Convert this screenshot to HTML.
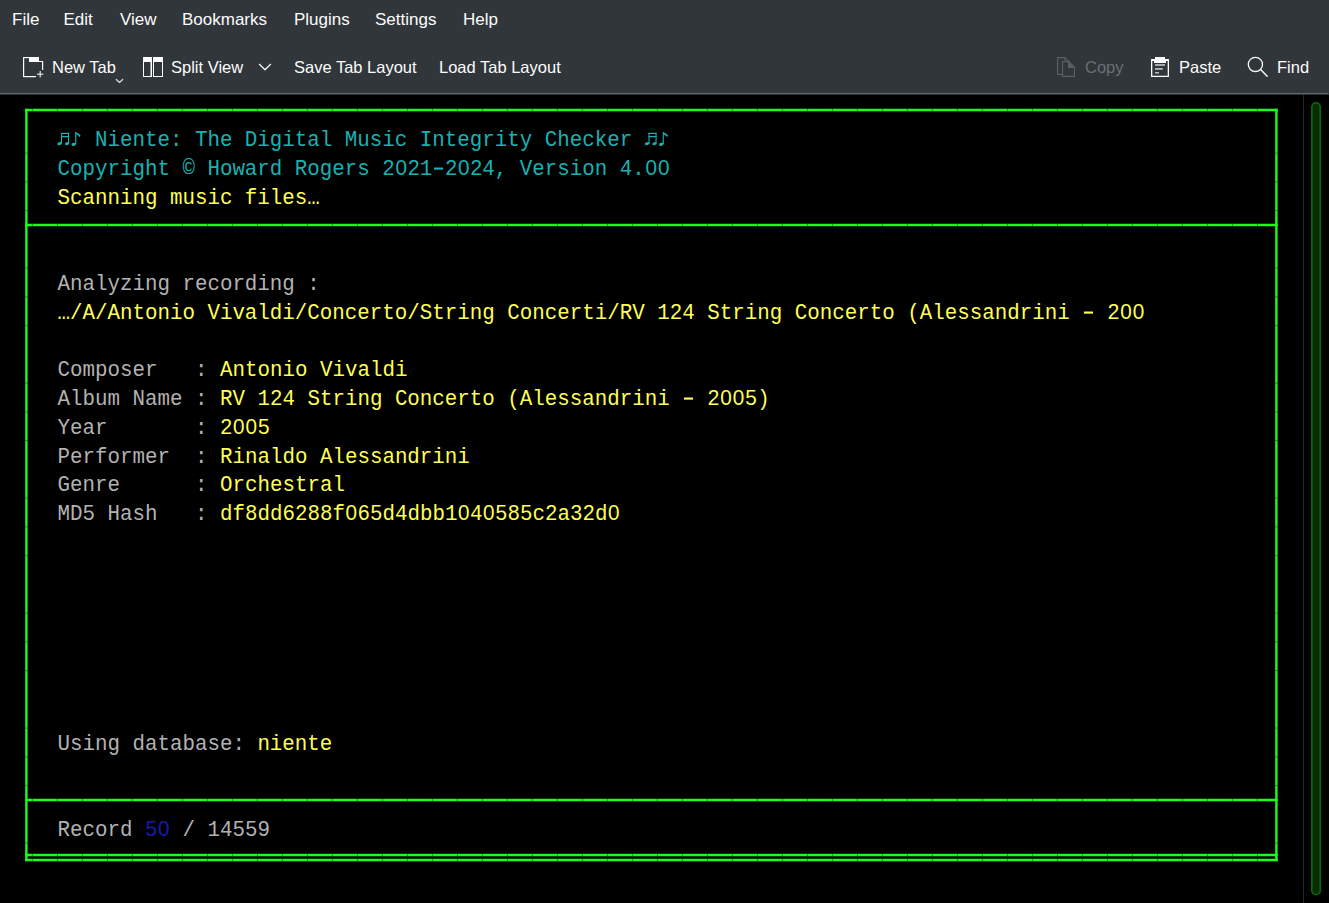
<!DOCTYPE html>
<html><head><meta charset="utf-8">
<style>
html,body{margin:0;padding:0;}
body{width:1329px;height:903px;position:relative;overflow:hidden;background:#000;font-family:"Liberation Sans",sans-serif;}
#top{position:absolute;left:0;top:0;width:1329px;height:95px;background:#31363b;}
#sep{position:absolute;left:0;top:93px;width:1328px;height:1px;background:#65696d;}
#sep2{position:absolute;left:0;top:94px;width:1328px;height:1px;background:#2b2f33;}
.m{position:absolute;top:1px;height:38px;line-height:38px;color:#fcfcfc;font-size:17px;white-space:pre;}
.t{position:absolute;top:48px;height:38px;line-height:38px;color:#fcfcfc;font-size:16.5px;white-space:pre;}
#vline{position:absolute;left:1303px;top:95px;width:1px;height:808px;background:#262626;}
#term{position:absolute;left:0;top:0;}
.r{position:absolute;left:57.4px;transform-origin:0 19px;transform:translateY(3px) scaleY(1.07);font-family:"Liberation Mono",monospace;font-size:20.833px;white-space:pre;color:#b2b2b2;height:28.75px;line-height:28.75px;}
.z{position:relative}.z::after{content:"";position:absolute;left:4.1px;width:4px;top:7.4px;height:4.4px;background:#000}
.d{position:relative}.d::after{content:"";position:absolute;left:1.6px;width:9.4px;top:10.2px;height:1.5px;background:currentColor}
.c{color:#18b2b2}.y{color:#ffff54}.b{color:#1818b2}.g{color:#b2b2b2}
</style></head><body>
<div id="top"></div>
<div id="sep"></div>
<div id="sep2"></div>
<div class="m" style="left:12px">File</div>
<div class="m" style="left:63.5px">Edit</div>
<div class="m" style="left:120px">View</div>
<div class="m" style="left:182px">Bookmarks</div>
<div class="m" style="left:294px">Plugins</div>
<div class="m" style="left:375px">Settings</div>
<div class="m" style="left:463px">Help</div>

<div class="t" style="left:52px">New Tab</div>
<div class="t" style="left:171px">Split View</div>
<div class="t" style="left:294px">Save Tab Layout</div>
<div class="t" style="left:439px">Load Tab Layout</div>
<div class="t" style="left:1085px;color:#6b6f73">Copy</div>
<div class="t" style="left:1179px">Paste</div>
<div class="t" style="left:1277px">Find</div>

<svg style="position:absolute;left:0;top:0" width="1329" height="93" viewBox="0 0 1329 93">
<g fill="#fcfcfc">
<rect x="23" y="57" width="1.2" height="20"/>
<rect x="23" y="57" width="16" height="1.2"/>
<rect x="29" y="57" width="10" height="5"/>
<rect x="39" y="61" width="4" height="1"/>
<rect x="42" y="61" width="1.2" height="9"/>
<rect x="23" y="76" width="13" height="1.2"/>
<rect x="37" y="73.6" width="6.4" height="1.2" opacity="0.85"/>
<rect x="39.6" y="71" width="1.2" height="6.4" opacity="0.85"/>
<path d="M143,57 H152 V77 H143 Z M144,62 V76 H150.5 V62 Z" fill-rule="evenodd"/>
<path d="M153,57 H163 V77 H153 Z M154,62 V76 H162 V62 Z" fill-rule="evenodd"/>
</g>
<g fill="none" stroke-linecap="round" stroke-linejoin="round">
<path d="M116.3,79.5 L119.5,82.4 L122.7,79.5" stroke="#d8d8d8" stroke-width="1.3"/>
<path d="M259.4,64.3 L265,69.8 L270.6,64.3" stroke="#fcfcfc" stroke-width="1.2"/>
</g>
<g fill="none" stroke="#5d6064" stroke-width="1.1">
<path d="M1065,60.5 V57.6 H1057.6 V74.4 H1062"/>
<path d="M1065,57.6 L1069,61.6"/>
<path d="M1062.6,61.6 H1069 L1074.5,67.2 V76.4 H1062.6 Z"/>
</g>
<path d="M1068,61.6 L1074.5,68 H1068 Z" fill="#5d6064"/>
<g fill="#fcfcfc">
<path d="M1151,59 H1155 V57 H1165 V59 H1169 V77 H1151 Z M1152.3,61 V75.7 H1167.7 V61 H1166 V63 H1154 V61 Z" fill-rule="evenodd"/>
</g>
<g fill="#c8c8c8">
<rect x="1155" y="64.2" width="10" height="1.6"/>
<rect x="1155" y="68.1" width="7.7" height="1.6"/>
<rect x="1155" y="72.1" width="4" height="1.4"/>
</g>
<g fill="none" stroke="#fcfcfc">
<circle cx="1255.4" cy="64.4" r="7.1" stroke-width="1.3"/>
<path d="M1260.6,69.6 L1267.2,76.2" stroke-width="1.4" stroke-linecap="round"/>
</g>
</svg>
<div id="vline"></div>
<svg style="position:absolute;left:1300px;top:95px" width="29" height="808"><rect x="11.85" y="7.85" width="8.4" height="791.8" rx="4.2" fill="#062d06" stroke="#0c640c" stroke-width="1.7"/></svg>

<svg id="term" width="1329" height="903" viewBox="0 0 1329 903">
<g fill="#1aff1a">
<rect x="25.2" y="108.75" width="1252.4" height="2.5"/>
<rect x="25.2" y="223.75" width="1252.4" height="2.5"/>
<rect x="25.2" y="798.75" width="1252.4" height="2.5"/>
<rect x="25.2" y="853.75" width="1252.4" height="2.5"/>
<rect x="25.2" y="858.75" width="1252.4" height="2.5"/>
<rect x="25.2" y="108.75" width="2.4" height="752.5"/>
<rect x="1275.2" y="108.75" width="2.4" height="752.5"/>
</g>
<g id="notes" fill="#18b2b2">
<ellipse cx="59.6" cy="143.6" rx="2.3" ry="1.5" transform="rotate(-15 59.6 143.6)"/>
<ellipse cx="67" cy="143.6" rx="2.1" ry="1.5" transform="rotate(-15 67 143.6)"/>
<rect x="61" y="132.8" width="1.1" height="10.8"/>
<rect x="68" y="132.8" width="1.1" height="10.8"/>
<rect x="61" y="132.8" width="8.1" height="1.2"/>
<rect x="61" y="136" width="8.1" height="1.2"/>
<ellipse cx="73.8" cy="144.3" rx="2.3" ry="1.5" transform="rotate(-15 73.8 144.3)"/>
<rect x="75.2" y="132" width="1.1" height="12"/>
<path d="M75.6,132 C77,133 79.5,133.8 80.5,135.3 L79.6,137.3 C79.3,136 77.8,134.8 75.8,134.2 Z"/>
</g>
<use href="#notes" transform="translate(587.5 0)"/>
<g fill="#000" opacity="0.38"><rect x="31.9" y="108.75" width="1" height="2.5"/><rect x="56.9" y="108.75" width="1" height="2.5"/><rect x="81.9" y="108.75" width="1" height="2.5"/><rect x="106.9" y="108.75" width="1" height="2.5"/><rect x="131.9" y="108.75" width="1" height="2.5"/><rect x="156.9" y="108.75" width="1" height="2.5"/><rect x="181.9" y="108.75" width="1" height="2.5"/><rect x="206.9" y="108.75" width="1" height="2.5"/><rect x="231.9" y="108.75" width="1" height="2.5"/><rect x="256.9" y="108.75" width="1" height="2.5"/><rect x="281.9" y="108.75" width="1" height="2.5"/><rect x="306.9" y="108.75" width="1" height="2.5"/><rect x="331.9" y="108.75" width="1" height="2.5"/><rect x="356.9" y="108.75" width="1" height="2.5"/><rect x="381.9" y="108.75" width="1" height="2.5"/><rect x="406.9" y="108.75" width="1" height="2.5"/><rect x="431.9" y="108.75" width="1" height="2.5"/><rect x="456.9" y="108.75" width="1" height="2.5"/><rect x="481.9" y="108.75" width="1" height="2.5"/><rect x="506.9" y="108.75" width="1" height="2.5"/><rect x="531.9" y="108.75" width="1" height="2.5"/><rect x="556.9" y="108.75" width="1" height="2.5"/><rect x="581.9" y="108.75" width="1" height="2.5"/><rect x="606.9" y="108.75" width="1" height="2.5"/><rect x="631.9" y="108.75" width="1" height="2.5"/><rect x="656.9" y="108.75" width="1" height="2.5"/><rect x="681.9" y="108.75" width="1" height="2.5"/><rect x="706.9" y="108.75" width="1" height="2.5"/><rect x="731.9" y="108.75" width="1" height="2.5"/><rect x="756.9" y="108.75" width="1" height="2.5"/><rect x="781.9" y="108.75" width="1" height="2.5"/><rect x="806.9" y="108.75" width="1" height="2.5"/><rect x="831.9" y="108.75" width="1" height="2.5"/><rect x="856.9" y="108.75" width="1" height="2.5"/><rect x="881.9" y="108.75" width="1" height="2.5"/><rect x="906.9" y="108.75" width="1" height="2.5"/><rect x="931.9" y="108.75" width="1" height="2.5"/><rect x="956.9" y="108.75" width="1" height="2.5"/><rect x="981.9" y="108.75" width="1" height="2.5"/><rect x="1006.9" y="108.75" width="1" height="2.5"/><rect x="1031.9" y="108.75" width="1" height="2.5"/><rect x="1056.9" y="108.75" width="1" height="2.5"/><rect x="1081.9" y="108.75" width="1" height="2.5"/><rect x="1106.9" y="108.75" width="1" height="2.5"/><rect x="1131.9" y="108.75" width="1" height="2.5"/><rect x="1156.9" y="108.75" width="1" height="2.5"/><rect x="1181.9" y="108.75" width="1" height="2.5"/><rect x="1206.9" y="108.75" width="1" height="2.5"/><rect x="1231.9" y="108.75" width="1" height="2.5"/><rect x="1256.9" y="108.75" width="1" height="2.5"/><rect x="31.9" y="223.75" width="1" height="2.5"/><rect x="56.9" y="223.75" width="1" height="2.5"/><rect x="81.9" y="223.75" width="1" height="2.5"/><rect x="106.9" y="223.75" width="1" height="2.5"/><rect x="131.9" y="223.75" width="1" height="2.5"/><rect x="156.9" y="223.75" width="1" height="2.5"/><rect x="181.9" y="223.75" width="1" height="2.5"/><rect x="206.9" y="223.75" width="1" height="2.5"/><rect x="231.9" y="223.75" width="1" height="2.5"/><rect x="256.9" y="223.75" width="1" height="2.5"/><rect x="281.9" y="223.75" width="1" height="2.5"/><rect x="306.9" y="223.75" width="1" height="2.5"/><rect x="331.9" y="223.75" width="1" height="2.5"/><rect x="356.9" y="223.75" width="1" height="2.5"/><rect x="381.9" y="223.75" width="1" height="2.5"/><rect x="406.9" y="223.75" width="1" height="2.5"/><rect x="431.9" y="223.75" width="1" height="2.5"/><rect x="456.9" y="223.75" width="1" height="2.5"/><rect x="481.9" y="223.75" width="1" height="2.5"/><rect x="506.9" y="223.75" width="1" height="2.5"/><rect x="531.9" y="223.75" width="1" height="2.5"/><rect x="556.9" y="223.75" width="1" height="2.5"/><rect x="581.9" y="223.75" width="1" height="2.5"/><rect x="606.9" y="223.75" width="1" height="2.5"/><rect x="631.9" y="223.75" width="1" height="2.5"/><rect x="656.9" y="223.75" width="1" height="2.5"/><rect x="681.9" y="223.75" width="1" height="2.5"/><rect x="706.9" y="223.75" width="1" height="2.5"/><rect x="731.9" y="223.75" width="1" height="2.5"/><rect x="756.9" y="223.75" width="1" height="2.5"/><rect x="781.9" y="223.75" width="1" height="2.5"/><rect x="806.9" y="223.75" width="1" height="2.5"/><rect x="831.9" y="223.75" width="1" height="2.5"/><rect x="856.9" y="223.75" width="1" height="2.5"/><rect x="881.9" y="223.75" width="1" height="2.5"/><rect x="906.9" y="223.75" width="1" height="2.5"/><rect x="931.9" y="223.75" width="1" height="2.5"/><rect x="956.9" y="223.75" width="1" height="2.5"/><rect x="981.9" y="223.75" width="1" height="2.5"/><rect x="1006.9" y="223.75" width="1" height="2.5"/><rect x="1031.9" y="223.75" width="1" height="2.5"/><rect x="1056.9" y="223.75" width="1" height="2.5"/><rect x="1081.9" y="223.75" width="1" height="2.5"/><rect x="1106.9" y="223.75" width="1" height="2.5"/><rect x="1131.9" y="223.75" width="1" height="2.5"/><rect x="1156.9" y="223.75" width="1" height="2.5"/><rect x="1181.9" y="223.75" width="1" height="2.5"/><rect x="1206.9" y="223.75" width="1" height="2.5"/><rect x="1231.9" y="223.75" width="1" height="2.5"/><rect x="1256.9" y="223.75" width="1" height="2.5"/><rect x="31.9" y="798.75" width="1" height="2.5"/><rect x="56.9" y="798.75" width="1" height="2.5"/><rect x="81.9" y="798.75" width="1" height="2.5"/><rect x="106.9" y="798.75" width="1" height="2.5"/><rect x="131.9" y="798.75" width="1" height="2.5"/><rect x="156.9" y="798.75" width="1" height="2.5"/><rect x="181.9" y="798.75" width="1" height="2.5"/><rect x="206.9" y="798.75" width="1" height="2.5"/><rect x="231.9" y="798.75" width="1" height="2.5"/><rect x="256.9" y="798.75" width="1" height="2.5"/><rect x="281.9" y="798.75" width="1" height="2.5"/><rect x="306.9" y="798.75" width="1" height="2.5"/><rect x="331.9" y="798.75" width="1" height="2.5"/><rect x="356.9" y="798.75" width="1" height="2.5"/><rect x="381.9" y="798.75" width="1" height="2.5"/><rect x="406.9" y="798.75" width="1" height="2.5"/><rect x="431.9" y="798.75" width="1" height="2.5"/><rect x="456.9" y="798.75" width="1" height="2.5"/><rect x="481.9" y="798.75" width="1" height="2.5"/><rect x="506.9" y="798.75" width="1" height="2.5"/><rect x="531.9" y="798.75" width="1" height="2.5"/><rect x="556.9" y="798.75" width="1" height="2.5"/><rect x="581.9" y="798.75" width="1" height="2.5"/><rect x="606.9" y="798.75" width="1" height="2.5"/><rect x="631.9" y="798.75" width="1" height="2.5"/><rect x="656.9" y="798.75" width="1" height="2.5"/><rect x="681.9" y="798.75" width="1" height="2.5"/><rect x="706.9" y="798.75" width="1" height="2.5"/><rect x="731.9" y="798.75" width="1" height="2.5"/><rect x="756.9" y="798.75" width="1" height="2.5"/><rect x="781.9" y="798.75" width="1" height="2.5"/><rect x="806.9" y="798.75" width="1" height="2.5"/><rect x="831.9" y="798.75" width="1" height="2.5"/><rect x="856.9" y="798.75" width="1" height="2.5"/><rect x="881.9" y="798.75" width="1" height="2.5"/><rect x="906.9" y="798.75" width="1" height="2.5"/><rect x="931.9" y="798.75" width="1" height="2.5"/><rect x="956.9" y="798.75" width="1" height="2.5"/><rect x="981.9" y="798.75" width="1" height="2.5"/><rect x="1006.9" y="798.75" width="1" height="2.5"/><rect x="1031.9" y="798.75" width="1" height="2.5"/><rect x="1056.9" y="798.75" width="1" height="2.5"/><rect x="1081.9" y="798.75" width="1" height="2.5"/><rect x="1106.9" y="798.75" width="1" height="2.5"/><rect x="1131.9" y="798.75" width="1" height="2.5"/><rect x="1156.9" y="798.75" width="1" height="2.5"/><rect x="1181.9" y="798.75" width="1" height="2.5"/><rect x="1206.9" y="798.75" width="1" height="2.5"/><rect x="1231.9" y="798.75" width="1" height="2.5"/><rect x="1256.9" y="798.75" width="1" height="2.5"/><rect x="31.9" y="853.75" width="1" height="2.5"/><rect x="56.9" y="853.75" width="1" height="2.5"/><rect x="81.9" y="853.75" width="1" height="2.5"/><rect x="106.9" y="853.75" width="1" height="2.5"/><rect x="131.9" y="853.75" width="1" height="2.5"/><rect x="156.9" y="853.75" width="1" height="2.5"/><rect x="181.9" y="853.75" width="1" height="2.5"/><rect x="206.9" y="853.75" width="1" height="2.5"/><rect x="231.9" y="853.75" width="1" height="2.5"/><rect x="256.9" y="853.75" width="1" height="2.5"/><rect x="281.9" y="853.75" width="1" height="2.5"/><rect x="306.9" y="853.75" width="1" height="2.5"/><rect x="331.9" y="853.75" width="1" height="2.5"/><rect x="356.9" y="853.75" width="1" height="2.5"/><rect x="381.9" y="853.75" width="1" height="2.5"/><rect x="406.9" y="853.75" width="1" height="2.5"/><rect x="431.9" y="853.75" width="1" height="2.5"/><rect x="456.9" y="853.75" width="1" height="2.5"/><rect x="481.9" y="853.75" width="1" height="2.5"/><rect x="506.9" y="853.75" width="1" height="2.5"/><rect x="531.9" y="853.75" width="1" height="2.5"/><rect x="556.9" y="853.75" width="1" height="2.5"/><rect x="581.9" y="853.75" width="1" height="2.5"/><rect x="606.9" y="853.75" width="1" height="2.5"/><rect x="631.9" y="853.75" width="1" height="2.5"/><rect x="656.9" y="853.75" width="1" height="2.5"/><rect x="681.9" y="853.75" width="1" height="2.5"/><rect x="706.9" y="853.75" width="1" height="2.5"/><rect x="731.9" y="853.75" width="1" height="2.5"/><rect x="756.9" y="853.75" width="1" height="2.5"/><rect x="781.9" y="853.75" width="1" height="2.5"/><rect x="806.9" y="853.75" width="1" height="2.5"/><rect x="831.9" y="853.75" width="1" height="2.5"/><rect x="856.9" y="853.75" width="1" height="2.5"/><rect x="881.9" y="853.75" width="1" height="2.5"/><rect x="906.9" y="853.75" width="1" height="2.5"/><rect x="931.9" y="853.75" width="1" height="2.5"/><rect x="956.9" y="853.75" width="1" height="2.5"/><rect x="981.9" y="853.75" width="1" height="2.5"/><rect x="1006.9" y="853.75" width="1" height="2.5"/><rect x="1031.9" y="853.75" width="1" height="2.5"/><rect x="1056.9" y="853.75" width="1" height="2.5"/><rect x="1081.9" y="853.75" width="1" height="2.5"/><rect x="1106.9" y="853.75" width="1" height="2.5"/><rect x="1131.9" y="853.75" width="1" height="2.5"/><rect x="1156.9" y="853.75" width="1" height="2.5"/><rect x="1181.9" y="853.75" width="1" height="2.5"/><rect x="1206.9" y="853.75" width="1" height="2.5"/><rect x="1231.9" y="853.75" width="1" height="2.5"/><rect x="1256.9" y="853.75" width="1" height="2.5"/><rect x="31.9" y="858.75" width="1" height="2.5"/><rect x="56.9" y="858.75" width="1" height="2.5"/><rect x="81.9" y="858.75" width="1" height="2.5"/><rect x="106.9" y="858.75" width="1" height="2.5"/><rect x="131.9" y="858.75" width="1" height="2.5"/><rect x="156.9" y="858.75" width="1" height="2.5"/><rect x="181.9" y="858.75" width="1" height="2.5"/><rect x="206.9" y="858.75" width="1" height="2.5"/><rect x="231.9" y="858.75" width="1" height="2.5"/><rect x="256.9" y="858.75" width="1" height="2.5"/><rect x="281.9" y="858.75" width="1" height="2.5"/><rect x="306.9" y="858.75" width="1" height="2.5"/><rect x="331.9" y="858.75" width="1" height="2.5"/><rect x="356.9" y="858.75" width="1" height="2.5"/><rect x="381.9" y="858.75" width="1" height="2.5"/><rect x="406.9" y="858.75" width="1" height="2.5"/><rect x="431.9" y="858.75" width="1" height="2.5"/><rect x="456.9" y="858.75" width="1" height="2.5"/><rect x="481.9" y="858.75" width="1" height="2.5"/><rect x="506.9" y="858.75" width="1" height="2.5"/><rect x="531.9" y="858.75" width="1" height="2.5"/><rect x="556.9" y="858.75" width="1" height="2.5"/><rect x="581.9" y="858.75" width="1" height="2.5"/><rect x="606.9" y="858.75" width="1" height="2.5"/><rect x="631.9" y="858.75" width="1" height="2.5"/><rect x="656.9" y="858.75" width="1" height="2.5"/><rect x="681.9" y="858.75" width="1" height="2.5"/><rect x="706.9" y="858.75" width="1" height="2.5"/><rect x="731.9" y="858.75" width="1" height="2.5"/><rect x="756.9" y="858.75" width="1" height="2.5"/><rect x="781.9" y="858.75" width="1" height="2.5"/><rect x="806.9" y="858.75" width="1" height="2.5"/><rect x="831.9" y="858.75" width="1" height="2.5"/><rect x="856.9" y="858.75" width="1" height="2.5"/><rect x="881.9" y="858.75" width="1" height="2.5"/><rect x="906.9" y="858.75" width="1" height="2.5"/><rect x="931.9" y="858.75" width="1" height="2.5"/><rect x="956.9" y="858.75" width="1" height="2.5"/><rect x="981.9" y="858.75" width="1" height="2.5"/><rect x="1006.9" y="858.75" width="1" height="2.5"/><rect x="1031.9" y="858.75" width="1" height="2.5"/><rect x="1056.9" y="858.75" width="1" height="2.5"/><rect x="1081.9" y="858.75" width="1" height="2.5"/><rect x="1106.9" y="858.75" width="1" height="2.5"/><rect x="1131.9" y="858.75" width="1" height="2.5"/><rect x="1156.9" y="858.75" width="1" height="2.5"/><rect x="1181.9" y="858.75" width="1" height="2.5"/><rect x="1206.9" y="858.75" width="1" height="2.5"/><rect x="1231.9" y="858.75" width="1" height="2.5"/><rect x="1256.9" y="858.75" width="1" height="2.5"/><rect x="25.2" y="152.60" width="2.4" height="1"/><rect x="1275.2" y="152.60" width="2.4" height="1"/><rect x="25.2" y="181.35" width="2.4" height="1"/><rect x="1275.2" y="181.35" width="2.4" height="1"/><rect x="25.2" y="210.10" width="2.4" height="1"/><rect x="1275.2" y="210.10" width="2.4" height="1"/><rect x="25.2" y="267.60" width="2.4" height="1"/><rect x="1275.2" y="267.60" width="2.4" height="1"/><rect x="25.2" y="296.35" width="2.4" height="1"/><rect x="1275.2" y="296.35" width="2.4" height="1"/><rect x="25.2" y="325.10" width="2.4" height="1"/><rect x="1275.2" y="325.10" width="2.4" height="1"/><rect x="25.2" y="382.60" width="2.4" height="1"/><rect x="1275.2" y="382.60" width="2.4" height="1"/><rect x="25.2" y="411.35" width="2.4" height="1"/><rect x="1275.2" y="411.35" width="2.4" height="1"/><rect x="25.2" y="440.10" width="2.4" height="1"/><rect x="1275.2" y="440.10" width="2.4" height="1"/><rect x="25.2" y="497.60" width="2.4" height="1"/><rect x="1275.2" y="497.60" width="2.4" height="1"/><rect x="25.2" y="526.35" width="2.4" height="1"/><rect x="1275.2" y="526.35" width="2.4" height="1"/><rect x="25.2" y="555.10" width="2.4" height="1"/><rect x="1275.2" y="555.10" width="2.4" height="1"/><rect x="25.2" y="612.60" width="2.4" height="1"/><rect x="1275.2" y="612.60" width="2.4" height="1"/><rect x="25.2" y="641.35" width="2.4" height="1"/><rect x="1275.2" y="641.35" width="2.4" height="1"/><rect x="25.2" y="670.10" width="2.4" height="1"/><rect x="1275.2" y="670.10" width="2.4" height="1"/><rect x="25.2" y="727.60" width="2.4" height="1"/><rect x="1275.2" y="727.60" width="2.4" height="1"/><rect x="25.2" y="756.35" width="2.4" height="1"/><rect x="1275.2" y="756.35" width="2.4" height="1"/><rect x="25.2" y="785.10" width="2.4" height="1"/><rect x="1275.2" y="785.10" width="2.4" height="1"/><rect x="25.2" y="842.60" width="2.4" height="1"/><rect x="1275.2" y="842.60" width="2.4" height="1"/></g>
</svg>
<div class="r c" style="top:124.35px">   Niente: The Digital Music Integrity Checker</div>
<div class="r c" style="top:153.1px">Copyright © Howard Rogers 2<span class="z">0</span>21<span class="d"> </span>2<span class="z">0</span>24, Version 4.<span class="z">0</span><span class="z">0</span></div>
<div class="r y" style="top:181.85px">Scanning music files…</div>
<div class="r" style="top:268.1px">Analyzing recording :</div>
<div class="r y" style="top:296.85px">…/A/Antonio Vivaldi/Concerto/String Concerti/RV 124 String Concerto (Alessandrini <span class="d"> </span> 2<span class="z">0</span><span class="z">0</span></div>
<div class="r" style="top:354.35px">Composer   : <span class="y">Antonio Vivaldi</span></div>
<div class="r" style="top:383.1px">Album Name : <span class="y">RV 124 String Concerto (Alessandrini <span class="d"> </span> 2<span class="z">0</span><span class="z">0</span>5)</span></div>
<div class="r" style="top:411.85px">Year       : <span class="y">2<span class="z">0</span><span class="z">0</span>5</span></div>
<div class="r" style="top:440.6px">Performer  : <span class="y">Rinaldo Alessandrini</span></div>
<div class="r" style="top:469.35px">Genre      : <span class="y">Orchestral</span></div>
<div class="r" style="top:498.1px">MD5 Hash   : <span class="y">df8dd6288f<span class="z">0</span>65d4dbb1<span class="z">0</span>4<span class="z">0</span>585c2a32d<span class="z">0</span></span></div>
<div class="r" style="top:728.1px">Using database: <span class="y">niente</span></div>
<div class="r" style="top:814.35px">Record <span class="b">5<span class="z">0</span></span> / 14559</div>
</body></html>
